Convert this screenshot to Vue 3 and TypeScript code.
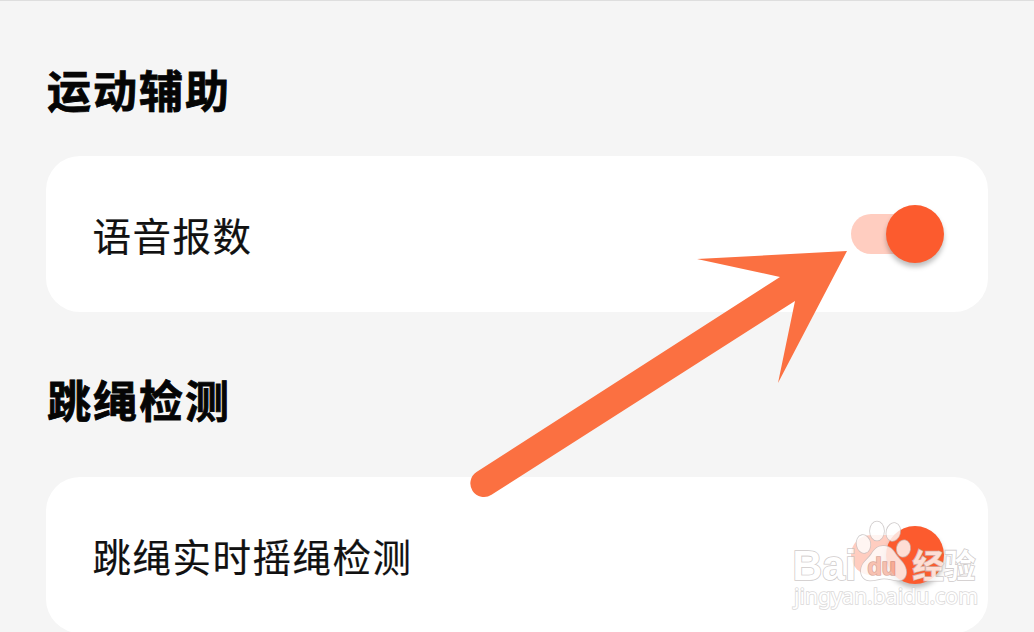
<script setup lang="ts">
import { ref } from 'vue'

interface Section {
  title: string
  label: string
  enabled: boolean
}

const sections = ref<Section[]>([
  { title: '运动辅助', label: '语音报数', enabled: true },
  { title: '跳绳检测', label: '跳绳实时摇绳检测', enabled: true },
])
</script>

<template>
  <main class="page">
    <section v-for="section in sections" :key="section.title" class="section">
      <h2 class="title">{{ section.title }}</h2>
      <div class="card">
        <span class="label">{{ section.label }}</span>
        <button
          class="switch"
          :class="{ on: section.enabled }"
          role="switch"
          :aria-checked="section.enabled"
          :aria-label="section.label"
          @click="section.enabled = !section.enabled"
        >
          <span class="thumb"></span>
        </button>
      </div>
    </section>

    <svg class="overlay" viewBox="0 0 1034 632" aria-hidden="true">
      <path
        class="arrow"
        d="M847 251 L697 259 L780 277 L476.500 472 A13.500 13.500 0 0 0 491.500 494.800 L795 301 L778 383 Z"
      />
      <g class="watermark">
        <text class="latin" x="792.500" y="579.500" textLength="64" lengthAdjust="spacingAndGlyphs">Bai</text>
        <ellipse cx="863.500" cy="544" rx="6.800" ry="9" transform="rotate(-10 863.500 544)" />
        <ellipse cx="877" cy="531" rx="7" ry="9.500" />
        <ellipse cx="893.300" cy="532" rx="6.800" ry="9" transform="rotate(14 893.300 532)" />
        <ellipse cx="903.500" cy="548.500" rx="6.700" ry="8.300" transform="rotate(10 903.500 548.500)" />
        <path
          d="M884 546 C878 545.500 874.500 549 871.500 554 C868 559.500 861.500 562.500 861 570 C860.500 576 864.500 580.500 870 580.500 C875 580.500 880 578.500 884 578.500 C889 578.500 894 580.500 898.500 580.500 C904 580.500 907 576 906 570 C905 563 899 559.500 895.500 554 C892.500 549 890 546.500 884 546 Z"
        />
        <text class="du" x="867.500" y="574.500" textLength="28.500" lengthAdjust="spacingAndGlyphs">du</text>
        <text class="cjk" x="912.500" y="577.500" textLength="63" lengthAdjust="spacingAndGlyphs">经验</text>
        <text class="domain" x="794" y="603.500" textLength="184" lengthAdjust="spacingAndGlyphs">jingyan.baidu.com</text>
      </g>
    </svg>
  </main>
</template>

<style>
body {
  overflow: hidden;
}
</style>

<style scoped>
.page {
  position: relative;
  box-sizing: border-box;
  width: 1034px;
  height: 632px;
  padding: 57px 46px 0;
  overflow: hidden;
  border-top: 1px solid #dedede;
  background: #f5f5f5;
  font-family: "Liberation Sans", "Noto Sans CJK SC", sans-serif;
}

.section {
  margin-bottom: 56px;
}

.title {
  height: 62px;
  margin: 0 0 36px;
  padding-left: 1px;
  color: #050505;
  font: 700 44px/62px "Noto Sans CJK SC", sans-serif;
  letter-spacing: 2px;
  -webkit-text-stroke: 0.8px #050505;
}

.section + .section .title {
  margin-bottom: 47px;
}

.card {
  display: flex;
  align-items: center;
  justify-content: space-between;
  box-sizing: border-box;
  width: 942px;
  height: 156px;
  padding: 0 44px 0 46.5px;
  border-radius: 34px;
  background: #fff;
}

.label {
  color: #111;
  font: 400 38.5px/60px "Noto Sans CJK SC", sans-serif;
  letter-spacing: 1.5px;
  -webkit-text-stroke: 0.2px #111;
}

.switch {
  display: flex;
  align-items: center;
  width: 93px;
  height: 40px;
  padding: 0;
  border: 0;
  border-radius: 20px;
  background: linear-gradient(90deg, #ffcdc0 0 70px, transparent 70px);
}

.switch.on {
  justify-content: flex-end;
}

.thumb {
  width: 58px;
  height: 58px;
  flex: none;
  border-radius: 50%;
  background: #fc5b2e;
  box-shadow: 0 4px 5px rgba(0, 0, 0, 0.25);
}

.overlay {
  position: absolute;
  top: -1px;
  left: 0;
  width: 1034px;
  height: 632px;
  pointer-events: none;
}

.arrow {
  fill: #fb7041;
}

.watermark {
  fill: #fff;
  stroke: #c4bebe;
  stroke-width: 1.6;
  paint-order: stroke;
  opacity: 0.8;
}

.latin {
  font: 700 43px "Liberation Sans", sans-serif;
}

.du {
  fill: #f7bfae;
  stroke: #d3a295;
  font: 700 24px "Liberation Sans", sans-serif;
}

.cjk {
  font: 700 33px "Noto Sans CJK SC", sans-serif;
}

.domain {
  stroke: #d2d0d0;
  font: 400 22px "Noto Sans", sans-serif;
}
</style>
